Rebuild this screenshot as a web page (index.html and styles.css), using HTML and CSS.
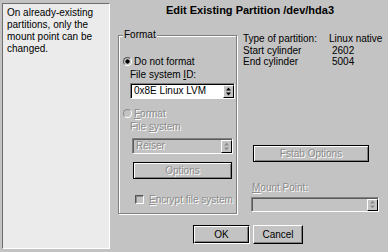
FILE: index.html
```html
<!DOCTYPE html>
<html lang="en">
<head>
    <meta charset="UTF-8">
    <title>Edit Existing Partition</title>
    <link rel="stylesheet" href="styles.css">
</head>
<body>
    <div class="window">
        <div class="help">On already-existing partitions, only the mount point can be changed.</div>

        <div class="main">
            <h1 class="title">Edit Existing Partition /dev/hda3</h1>

            <div class="body">
                <fieldset class="format">
                    <legend>Format</legend>

                    <div class="radio-row first">
                        <span class="radio on"></span>
                        <span>Do not format</span>
                    </div>
                    <div class="field-label">File system <u>I</u>D:</div>
                    <div class="select">
                        <span class="select-text">0x8E Linux LVM</span>
                        <span class="select-arrow">
                            <svg width="5" height="9" viewBox="0 0 5 9"><path d="M0 3.5 L2.5 0.5 L5 3.5Z M0 5.5 L2.5 8.5 L5 5.5Z" fill="#000"/></svg>
                        </span>
                    </div>

                    <div class="radio-row second disabled">
                        <span class="radio"></span>
                        <span><u>F</u>ormat</span>
                    </div>
                    <div class="field-label disabled">File <u>s</u>ystem</div>
                    <div class="select off">
                        <span class="select-text">Reiser</span>
                        <span class="select-arrow">
                            <svg width="5" height="9" viewBox="0 0 5 9"><path d="M0 3.5 L2.5 0.5 L5 3.5Z M0 5.5 L2.5 8.5 L5 5.5Z" fill="#8c8c8c"/></svg>
                        </span>
                    </div>
                    <button class="btn off options">Options</button>

                    <div class="check-row disabled">
                        <span class="check"></span>
                        <span><u>E</u>ncrypt file system</span>
                    </div>
                </fieldset>

                <div class="info">
                    <div class="facts">
                        <span>Type of partition:</span><span>Linux native</span>
                        <span>Start cylinder</span><span class="num">2602</span>
                        <span>End cylinder</span><span class="num">5004</span>
                    </div>
                    <button class="btn off fstab">Fstab Options</button>
                    <div class="field-label disabled mount-label"><u>M</u>ount Point:</div>
                    <div class="select off mount">
                        <span class="select-text"></span>
                        <span class="select-arrow">
                            <svg width="5" height="9" viewBox="0 0 5 9"><path d="M0 3.5 L2.5 0.5 L5 3.5Z M0 5.5 L2.5 8.5 L5 5.5Z" fill="#8c8c8c"/></svg>
                        </span>
                    </div>
                </div>
            </div>

            <div class="buttons">
                <div class="default-frame"><button class="btn ok">OK</button></div>
                <button class="btn cancel">Cancel</button>
            </div>
        </div>
    </div>
</body>
</html>
```

FILE: styles.css
```css
body {
    margin: 0;
    width: 388px;
    height: 252px;
    overflow: hidden;
    background: #c3c3c3;
    font-family: "Liberation Sans", Arial, sans-serif;
    font-size: 10px;
    color: #000;
}
.window {
    display: flex;
    height: 252px;
}
.help {
    box-sizing: border-box;
    width: 108px;
    height: 246px;
    margin: 3px 0 0 2px;
    padding: 3px 4px 0 4px;
    background: #ebebeb;
    border: 1px solid;
    border-color: #6e6e6e #fff #fff #6e6e6e;
    line-height: 12px;
}
.main {
    flex: 1;
    display: flex;
    flex-direction: column;
    padding-left: 8px;
}
.title {
    margin: 4px 0 0;
    padding-right: 6px;
    font-size: 11px;
    font-weight: bold;
    line-height: 13px;
    text-align: center;
}
.body {
    display: flex;
    margin-top: 12px;
}
u {
    text-decoration: underline;
}
.disabled {
    color: #8c8c8c;
    text-shadow: 1px 1px 0 #fff;
}

/* format frame */
.format {
    box-sizing: border-box;
    width: 119px;
    height: 185px;
    margin: 0;
    padding: 0 2px 0 4px;
    min-width: 0;
    display: flex;
    flex-direction: column;
    border: 1px solid #808080;
    box-shadow: 1px 1px 0 #fff, inset 1px 1px 0 #fff;
}
.format legend {
    margin-left: 0;
    padding: 0 1px;
    line-height: 12px;
    background: #c3c3c3;
}
.radio-row, .check-row {
    display: flex;
    align-items: center;
    gap: 2px;
    height: 12px;
}
.radio-row.first {
    margin-top: 14px;
}
.radio-row.second {
    margin-top: 8px;
}
.radio {
    box-sizing: border-box;
    width: 9px;
    height: 9px;
    border-radius: 50%;
    border: 1px solid;
    border-color: #555 #fff #fff #555;
    background: #c3c3c3;
}
.radio.on {
    background: radial-gradient(circle, #000 0 1.8px, #c3c3c3 2.4px);
}
.disabled .radio {
    border-color: #8c8c8c #fff #fff #8c8c8c;
}
.field-label {
    margin: 2px 0 0 7px;
    line-height: 12px;
}
.select {
    box-sizing: border-box;
    display: flex;
    height: 16px;
    margin: 2px -1px 0 7px;
    background: #fff;
    border: 1px solid;
    border-color: #808080 #fff #fff #808080;
    box-shadow: inset 1px 1px 0 #000;
}
.select-text {
    flex: 1;
    padding: 1px 0 0 3px;
    line-height: 12px;
}
.select-arrow {
    box-sizing: border-box;
    width: 11px;
    display: flex;
    align-items: center;
    justify-content: center;
    background: #c3c3c3;
    border: 1px solid;
    border-color: #fff #000 #000 #fff;
    margin: 1px 0 0;
}
.select.off {
    background: #c3c3c3;
    box-shadow: inset 1px 1px 0 #5a5a5a;
    color: #8c8c8c;
    text-shadow: 1px 1px 0 #fff;
    margin: 5px 1px 0 9px;
}

/* buttons */
.btn {
    box-sizing: border-box;
    height: 17px;
    padding: 0;
    background: #c3c3c3;
    border: 1px solid;
    border-color: #fff #000 #000 #fff;
    box-shadow: inset -1px -1px 0 #808080;
    font: inherit;
    color: #000;
    text-align: center;
}
.btn.off {
    color: #8c8c8c;
    text-shadow: 1px 1px 0 #fff;
    border-color: #000;
    box-shadow: inset 1px 1px 0 #fff, inset -1px -1px 0 #808080;
}
.options {
    margin: 8px 2px 0 10px;
}
.check-row {
    margin: 14px 0 0 12px;
    gap: 5px;
}
.check {
    box-sizing: border-box;
    width: 9px;
    height: 9px;
    border: 1px solid;
    border-color: #555 #fff #fff #555;
    box-shadow: inset 1px 1px 0 #8c8c8c;
}

/* partition details */
.info {
    flex: 1;
    display: flex;
    flex-direction: column;
    margin-left: 6px;
    padding-top: 4px;
}
.facts {
    display: grid;
    grid-template-columns: 86px auto;
    line-height: 11.5px;
}
.facts .num {
    padding-left: 3px;
}
.fstab {
    align-self: flex-start;
    width: 116px;
    margin: 77px 0 0 10px;
}
.mount-label {
    margin: 20px 0 0 9px;
}
.select.mount {
    width: 128px;
    height: 15px;
    margin: 3px 0 0 8px;
}

.buttons {
    display: flex;
    justify-content: center;
    gap: 3px;
    margin-top: 11px;
    padding-right: 10px;
}
.default-frame {
    box-sizing: border-box;
    width: 57px;
    height: 19px;
    border: 1px solid;
    border-color: #000 #fff #fff #000;
}
.ok {
    width: 55px;
}
.cancel {
    width: 50px;
    height: 19px;
}
```
